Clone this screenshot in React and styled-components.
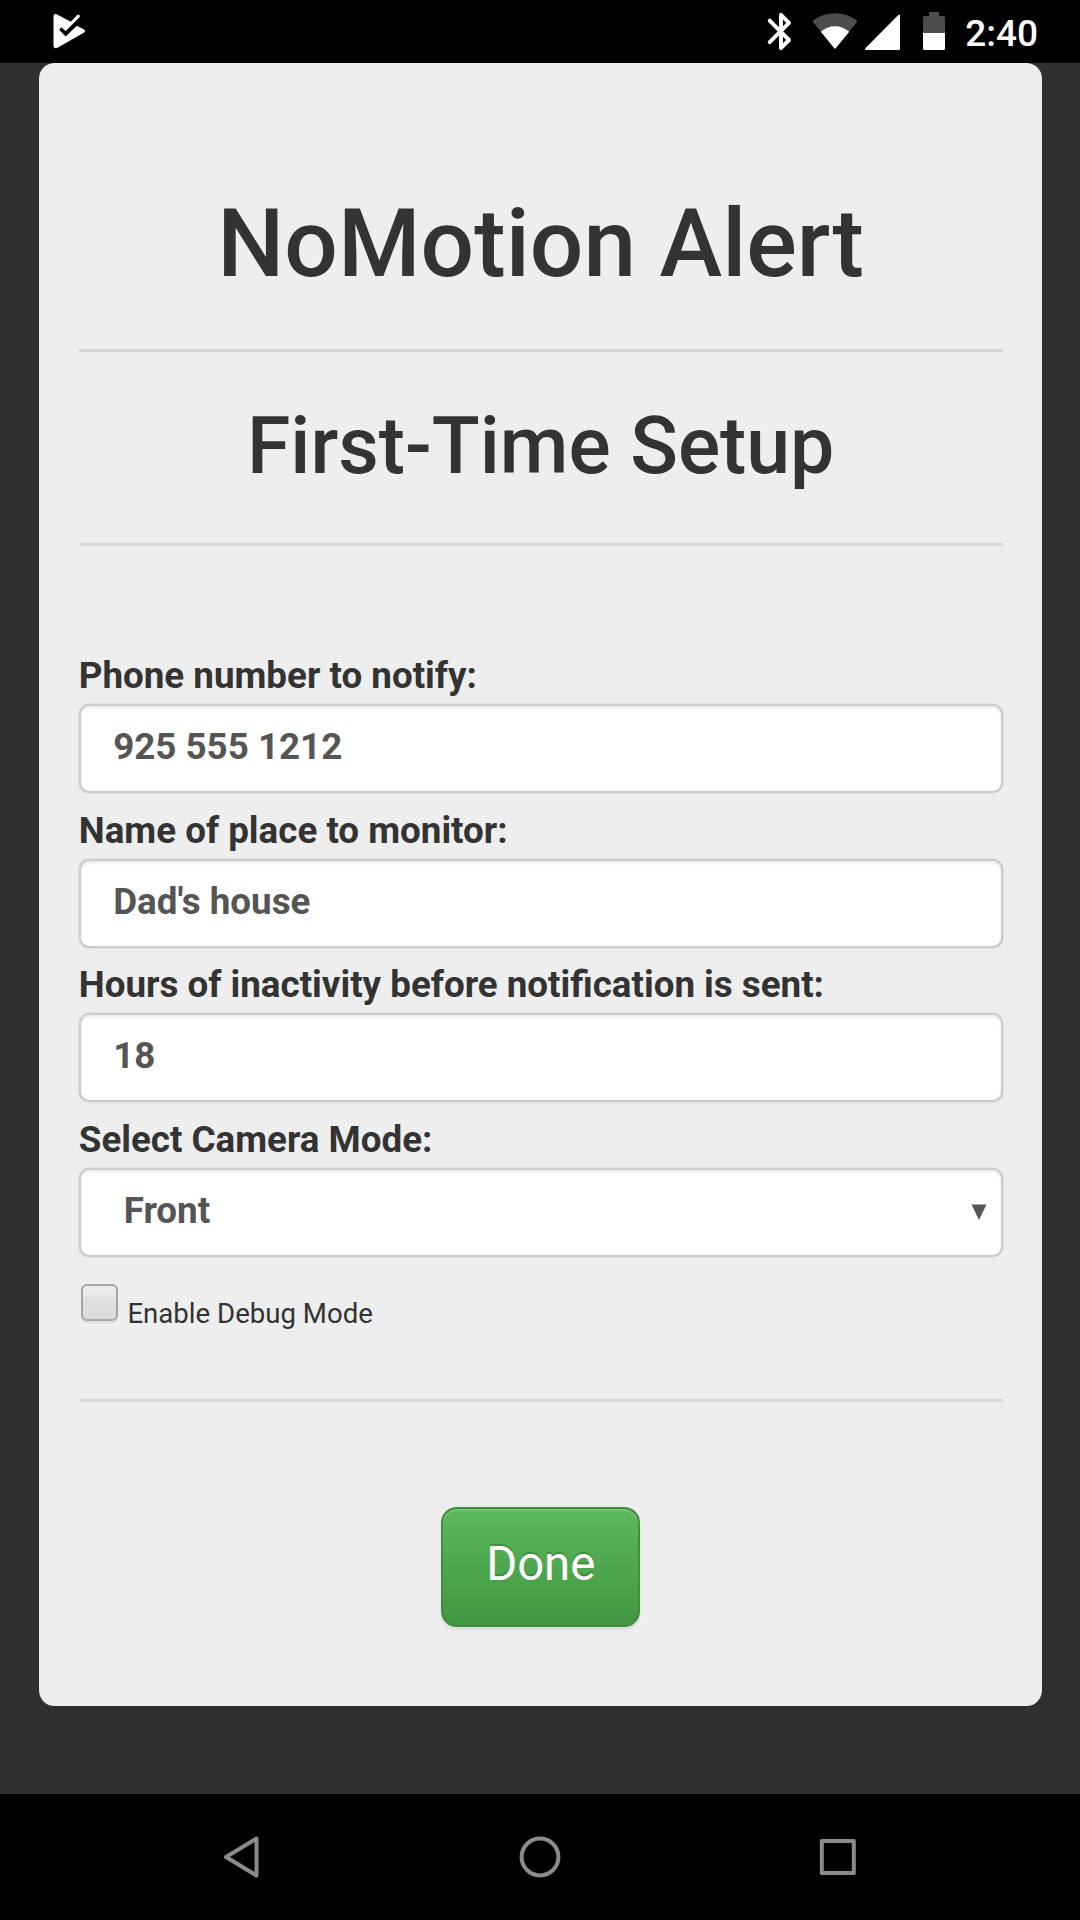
import React, { useState } from "react";
import styled, { createGlobalStyle } from "styled-components";

const GlobalStyle = createGlobalStyle`
  *, *::before, *::after { box-sizing: border-box; }
  body {
    margin: 0;
    background: #303030;
    color: #333;
    font-family: Roboto, "Noto Sans", sans-serif;
  }
`;

const Screen = styled.div`
  display: flex;
  flex-direction: column;
  width: 1080px;
  height: 1920px;
  overflow: hidden;
  background: #303030;
`;

const StatusBar = styled.header`
  display: flex;
  justify-content: space-between;
  flex: none;
  height: 63px;
  padding: 0 42px 0 48px;
  background: #000;
`;

const StatusIcons = styled.div`
  display: flex;
`;

const Clock = styled.span`
  margin-left: 14.4px;
  color: #fff;
  font-size: 37px;
  font-weight: 500;
  line-height: 68px;
`;

const Page = styled.main`
  flex: 1;
  padding: 0 38px 0 39.375px;
`;

const Card = styled.section`
  display: flex;
  flex-direction: column;
  height: 1643.4px;
  padding: 128.6px 39.375px 0;
  border-radius: 15.75px;
  background: #eee;
`;

const Title = styled.h1`
  margin: 0;
  font-size: 94.5px;
  font-weight: 500;
  line-height: 104px;
  text-align: center;
`;

const Subtitle = styled.h2`
  margin: 0;
  font-size: 78.75px;
  font-weight: 500;
  line-height: 86.6px;
  text-align: center;
`;

const Rule = styled.hr`
  flex: none;
  width: 100%;
  height: 3px;
  margin: ${(p) => p.$top}px 0 ${(p) => p.$bottom}px;
  border: 0;
  background: #d8d8d8;
`;

const Fields = styled.form`
  display: flex;
  flex-direction: column;
  gap: 11.75px;
`;

const Field = styled.label`
  display: flex;
  flex-direction: column;
  gap: 3px;
  font-size: 36.75px;
  font-weight: 700;
  line-height: 51px;
`;

const controlStyles = `
  display: block;
  width: 100%;
  height: 89px;
  margin: 0;
  border: 2px solid #ccc;
  border-radius: 10.5px;
  background: #fff;
  box-shadow: inset 0 2.6px 2.6px rgba(0, 0, 0, 0.075), 0 0 0 0.6px #d4d4d4;
  color: #555;
  font: inherit;
  outline: none;
`;

const TextInput = styled.input`
  ${controlStyles}
  padding: 0 32.4px 4px;
`;

const SelectWrap = styled.div`
  position: relative;
`;

const Select = styled.select`
  ${controlStyles}
  appearance: none;
  padding: 0 43px 4px;
`;

const SelectArrow = styled.svg`
  position: absolute;
  right: 16px;
  top: 36px;
  pointer-events: none;
`;

const CheckRow = styled.label`
  display: flex;
  align-items: flex-start;
  gap: 9px;
  height: 52px;
  margin-top: 26.5px;
  padding-left: 2.7px;
  font-size: 27.6px;
  line-height: 60px;
`;

const Checkbox = styled.input`
  appearance: none;
  flex: none;
  width: 37px;
  height: 37px;
  margin: 0;
  border: 2.6px solid #a6a6a6;
  border-radius: 6px;
  background: linear-gradient(#ededed, #ededed 20%, #dedede 45%, #dddddd);
  box-shadow: 0 2.6px 0 rgba(0, 0, 0, 0.06);
`;

const DoneButton = styled.button`
  align-self: center;
  width: 199.5px;
  height: 120.5px;
  padding: 0 0 6px;
  border: 2.6px solid #3e8f3e;
  border-radius: 15.75px;
  background: linear-gradient(#5cb85c, #419641) border-box;
  box-shadow: inset 0 2.6px 0 rgba(255, 255, 255, 0.15), 0 2.6px 2.6px rgba(0, 0, 0, 0.075);
  color: #fff;
  font: 400 47.25px / 63px Roboto, "Noto Sans", sans-serif;
  text-shadow: 0 -2px 0 rgba(0, 0, 0, 0.2);
`;

const NavBar = styled.nav`
  display: flex;
  flex: none;
  justify-content: space-between;
  height: 126px;
  padding: 38px 217px 0 216px;
  background: #000;
`;

const PlayCheckIcon = () => (
  <svg width="42" height="63" viewBox="48 0 42 63">
    <path
      d="M56.6 14.3 L70.7 21.7 L77.3 15 Q78.5 14 79.5 15.2 Q80.2 16.2 79.5 17.3 L65.7 31 L61.2 27.3 L59.2 30 L65.7 36.5 L76.8 25.7 L84.2 29.6 Q86 31 84.2 32.5 L57.5 47.8 Q53.5 49 53.5 46 V16.2 Q53.5 13 56.6 14.3 Z"
      fill="#fff"
    />
  </svg>
);

const BluetoothIcon = () => (
  <svg width="37" height="63" viewBox="762 0 37 63">
    <path d="M769.7 20.6 L789 40 L781 48 V14.8 L789 22.8 L769.7 42.2" fill="none" stroke="#fff" strokeWidth="3.9" strokeLinejoin="round" strokeLinecap="round" />
  </svg>
);

const WifiIcon = () => (
  <svg width="61" height="63" viewBox="799 0 61 63">
    <path d="M835 49 L813.3 22.2 Q812.5 21 813.8 20 Q823 13.2 835 13.2 Q847 13.2 856.2 20 Q857.5 21 856.7 22.2 Z" fill="#4d4d4d" />
    <path d="M835 49 L820.8 31.8 Q827 26.2 835 26.2 Q843 26.2 849.2 31.8 Z" fill="#fff" />
  </svg>
);

const SignalIcon = () => (
  <svg width="46" height="63" viewBox="860 0 46 63">
    <path d="M866 48.9 L899 15.8 V48.9 Z" fill="#fff" stroke="#fff" strokeWidth="2" strokeLinejoin="round" />
  </svg>
);

const BatteryIcon = () => (
  <svg width="45" height="63" viewBox="906 0 45 63">
    <path d="M929 12 H939 V16 H943.5 Q945 16 945 17.5 V33 H923 V17.5 Q923 16 924.5 16 H929 Z" fill="#4d4d4d" />
    <path d="M923 33 H945 V48.5 Q945 50 943.5 50 H924.5 Q923 50 923 48.5 Z" fill="#fff" />
  </svg>
);

const NavIcon = ({ children }) => (
  <svg width="50" height="50" viewBox="0 0 50 50" fill="none" stroke="#8b8b8b" strokeWidth="4" strokeLinejoin="round">
    {children}
  </svg>
);

const textFields = [
  { label: "Phone number to notify:", value: "925 555 1212" },
  { label: "Name of place to monitor:", value: "Dad's house" },
  { label: "Hours of inactivity before notification is sent:", value: "18" },
];

export default function App() {
  const [debug, setDebug] = useState(false);
  return (
    <Screen>
      <GlobalStyle />
      <StatusBar>
        <PlayCheckIcon />
        <StatusIcons>
          <BluetoothIcon />
          <WifiIcon />
          <SignalIcon />
          <BatteryIcon />
          <Clock>2:40</Clock>
        </StatusIcons>
      </StatusBar>
      <Page>
        <Card>
          <Title>NoMotion Alert</Title>
          <Rule $top={53.4} $bottom={50.6} />
          <Subtitle>First-Time Setup</Subtitle>
          <Rule $top={53.8} $bottom={104} />
          <Fields>
            {textFields.map((f) => (
              <Field key={f.label}>
                {f.label}
                <TextInput defaultValue={f.value} />
              </Field>
            ))}
            <Field>
              Select Camera Mode:
              <SelectWrap>
                <Select defaultValue="Front">
                  <option>Front</option>
                  <option>Back</option>
                </Select>
                <SelectArrow width="16" height="16" viewBox="0 0 16 16">
                  <path d="M0.5 0.5 H15.5 L8 16 Z" fill="#555" />
                </SelectArrow>
              </SelectWrap>
            </Field>
          </Fields>
          <CheckRow>
            <Checkbox type="checkbox" checked={debug} onChange={(e) => setDebug(e.target.checked)} />
            Enable Debug Mode
          </CheckRow>
          <Rule $top={63.2} $bottom={105} />
          <DoneButton type="button">Done</DoneButton>
        </Card>
      </Page>
      <NavBar>
        <NavIcon>
          <path d="M40.5 6.5 V43.5 L10 25 Z" />
        </NavIcon>
        <NavIcon>
          <circle cx="25" cy="25" r="18.4" />
        </NavIcon>
        <NavIcon>
          <rect x="8.8" y="9" width="32" height="32" />
        </NavIcon>
      </NavBar>
    </Screen>
  );
}
